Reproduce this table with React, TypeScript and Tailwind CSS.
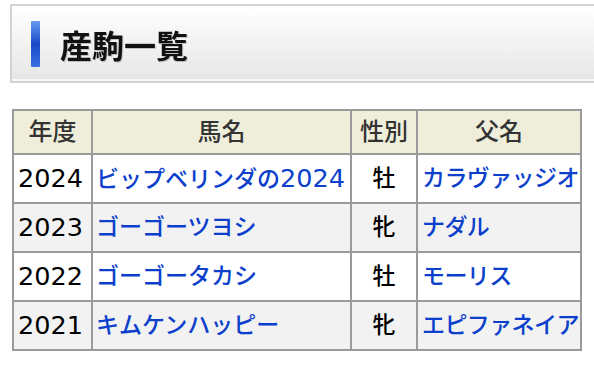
type Foal = {
  year: string;
  name: string;
  sex: string;
  sire: string;
};

const foals: Foal[] = [
  { year: '2024', name: 'ビップベリンダの2024', sex: '牡', sire: 'カラヴァッジオ' },
  { year: '2023', name: 'ゴーゴーツヨシ', sex: '牝', sire: 'ナダル' },
  { year: '2022', name: 'ゴーゴータカシ', sex: '牡', sire: 'モーリス' },
  { year: '2021', name: 'キムケンハッピー', sex: '牝', sire: 'エピファネイア' },
];

// digits render wider than the kana in the original, so give them their own size
function NameText({ text }: { text: string }) {
  return (
    <>
      {text.split(/(\d+)/).map((part, i) =>
        /^\d+$/.test(part) ? (
          <span key={i} className="text-[25.5px] font-normal">
            {part}
          </span>
        ) : (
          <span key={i}>{part}</span>
        )
      )}
    </>
  );
}

export default function App() {
  return (
    <div className="w-[594px] h-[370px] overflow-hidden bg-white font-['DejaVu_Sans','Noto_Sans_CJK_JP',sans-serif]">
      {/* heading bar */}
      <div className="ml-[10px] mt-[4px] w-[600px] h-[79px] border-2 border-[#d2d2d2] bg-gradient-to-b from-white to-[#e6e6e6] shadow-[inset_0_-2px_0_#f7f7f7,inset_0_1px_0_#fff] flex items-center">
        <div className="ml-[19px] w-[9px] h-[46px] rounded-[1px] bg-gradient-to-b from-[#6a9af0] via-[#1848c8] to-[#3a70e0]" />
        <h1 className="ml-[20px] text-[32px] font-bold text-[#111] font-['Noto_Sans_CJK_JP',sans-serif] drop-shadow-[1px_1px_0_rgba(0,0,0,0.2)] leading-none">
          産駒一覧
        </h1>
      </div>

      {/* foal table */}
      <table className="ml-[12px] mt-[26px] w-[568px] border-collapse border-2 border-[#9a9a9a] text-[23px] font-medium leading-none table-fixed">
        <colgroup>
          <col className="w-[79px]" />
          <col className="w-[259px]" />
          <col className="w-[66px]" />
          <col className="w-[164px]" />
        </colgroup>
        <thead>
          <tr className="h-[44px] bg-[#efeedb] text-[#333] text-[24px]">
            <th className="border-2 border-[#9a9a9a] font-medium text-center">年度</th>
            <th className="border-2 border-[#9a9a9a] font-medium text-center">馬名</th>
            <th className="border-2 border-[#9a9a9a] font-medium text-center">性別</th>
            <th className="border-2 border-[#9a9a9a] font-medium text-center">父名</th>
          </tr>
        </thead>
        <tbody>
          {foals.map((f, i) => (
            <tr key={f.year} className={`h-[49px] ${i % 2 === 1 ? 'bg-[#f2f2f2]' : 'bg-white'}`}>
              <td className="border-2 border-[#9a9a9a] px-[4px] text-black text-[25.5px] font-normal whitespace-nowrap">{f.year}</td>
              <td className="border-2 border-[#9a9a9a] px-[3px] whitespace-nowrap">
                <a href="#" className="text-[#0b3fcc]">
                  <NameText text={f.name} />
                </a>
              </td>
              <td className="border-2 border-[#9a9a9a] text-center text-black">{f.sex}</td>
              <td className="border-2 border-[#9a9a9a] px-[4px] whitespace-nowrap tracking-[-0.6px]">
                <a href="#" className="text-[#0b3fcc]">{f.sire}</a>
              </td>
            </tr>
          ))}
        </tbody>
      </table>
    </div>
  );
}
